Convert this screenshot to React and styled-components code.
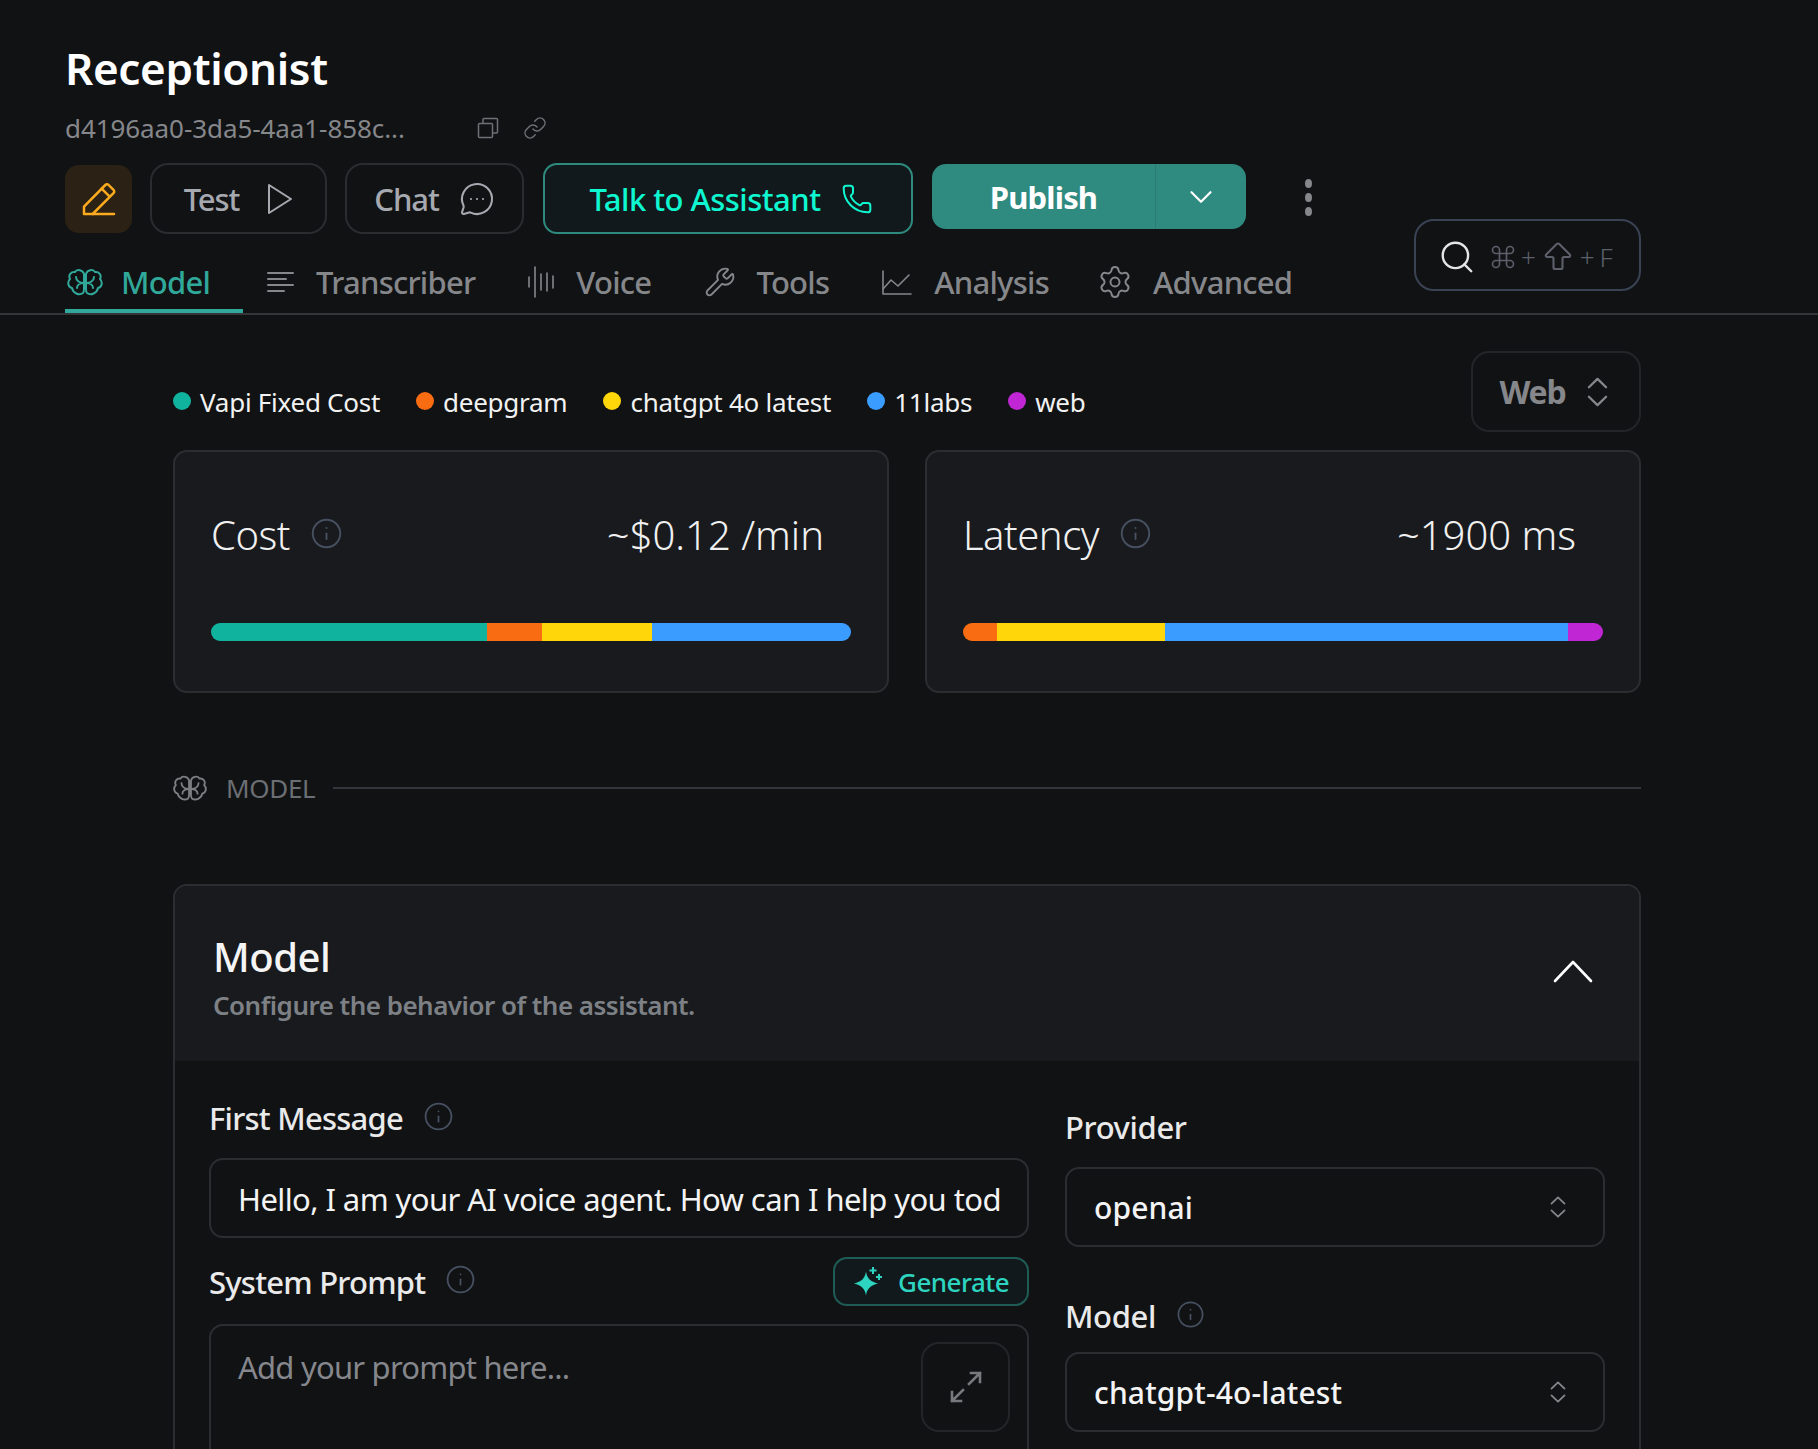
import React from "react";
import styled, { createGlobalStyle } from "styled-components";
import { MessageCircleMore, Phone, Link, ChevronDown, Search, Command, ArrowBigUp, Wrench, Settings, Info } from "lucide-react";

const Global = createGlobalStyle`
  html, body { margin: 0; padding: 0; background: #111214; height: 1449px; overflow: hidden; }
  #root { height: 1449px; overflow: hidden; }
  * { box-sizing: border-box; }
  body { font-family: "Noto Sans", "Open Sans", sans-serif; color: #f1f1f1; }
`;

const Page = styled.div`
  width: 1818px;
  height: 1449px;
  overflow: hidden;
`;
const Header = styled.header`
  height: 315px;
  padding: 43px 177px 0 65px;
  border-bottom: 2px solid #333538;
  display: flex;
  justify-content: space-between;
`;
const HeaderLeft = styled.div`
  display: flex;
  flex-direction: column;
`;
const Title = styled.h1`
  margin: 0;
  height: 50px;
  line-height: 50px;
  font-size: 44px;
  font-weight: 600;
  color: #fff;
  letter-spacing: -0.008em;
`;
const IdRow = styled.div`
  height: 36px;
  margin-top: 17px;
  display: flex;
  align-items: center;
  color: #85878a;
  font-size: 26px;
  letter-spacing: -0.003em;
`;
const IdText = styled.span`
  width: 411px;
`;
const IdIcon = styled.span`
  display: flex;
  width: 47px;
  color: #6e7074;
`;
const Buttons = styled.div`
  display: flex;
  align-items: center;
  margin-top: 17px;
  height: 71px;
`;
const EditBtn = styled.button`
  width: 67px;
  height: 68px;
  margin-right: 18px;
  border: 0;
  padding: 0;
  border-radius: 14px;
  background: #2c2115;
  color: #fbab1d;
  display: flex;
  align-items: center;
  justify-content: center;
`;
const GhostBtn = styled.button`
  width: ${p => p.$w}px;
  height: 71px;
  margin-right: ${p => p.$mr}px;
  border: 2px solid #2a2c30;
  border-radius: 18px;
  background: transparent;
  color: #a6a9b0;
  font: 500 31px "Noto Sans", sans-serif;
  letter-spacing: -0.035em;
  display: flex;
  align-items: center;
  justify-content: center;
  gap: ${p => p.$gap}px;
  padding: 0;
`;
const TalkBtn = styled.button`
  width: 370px;
  height: 71px;
  margin-right: 19px;
  border: 2px solid #2e8a7f;
  border-radius: 14px;
  background: #12191c;
  color: #0ef7d0;
  font: 500 31px "Noto Sans", sans-serif;
  letter-spacing: -0.017em;
  display: flex;
  align-items: center;
  justify-content: center;
  gap: 20px;
  padding: 0 0 0 6px;
`;
const PublishGroup = styled.div`
  width: 314px;
  height: 65px;
  margin-top: -4px;
  margin-right: 59px;
  border-radius: 14px;
  background: #2f8a7f;
  display: flex;
  overflow: hidden;
`;
const PublishBtn = styled.button`
  width: 223px;
  border: 0;
  padding: 0;
  background: transparent;
  color: #fff;
  font: 700 31px "Noto Sans", sans-serif;
  letter-spacing: -0.027em;
`;
const PublishArrow = styled.button`
  flex: 1;
  border: 0;
  border-left: 1px solid #2b7c72;
  padding: 0;
  background: transparent;
  color: #fff;
  display: flex;
  align-items: center;
  justify-content: center;
`;
const Dots = styled.div`
  width: 7px;
  display: flex;
  flex-direction: column;
  gap: 5px;
  margin-top: -2px;
  & > i {
    display: block;
    width: 7px;
    height: 9px;
    border-radius: 50%;
    background: #85878a;
  }
`;
const Tabs = styled.nav`
  display: flex;
  gap: 23px;
  height: 79px;
`;
const Tab = styled.div`
  height: 79px;
  padding: 20px ${p => p.$pr || 31}px 0 ${p => p.$pl || 0}px;
  display: flex;
  align-items: center;
  gap: ${p => p.$gap || 20}px;
  border-bottom: 4px solid ${p => (p.$active ? "#30a89a" : "transparent")};
  color: ${p => (p.$active ? "#30a89a" : "#85878a")};
  font-size: 31px;
  font-weight: 500;
  letter-spacing: -0.024em;
  & > svg { flex: none; }
`;
const SearchBox = styled.div`
  align-self: flex-end;
  width: 227px;
  height: 72px;
  margin-bottom: 22px;
  border: 2px solid #3a4354;
  border-radius: 20px;
  display: flex;
  align-items: center;
  padding: 4px 0 0 22px;
  color: #5b606a;
  font-size: 26px;
  font-weight: 300;
  word-spacing: -2px;
`;
const SearchHint = styled.span`
  display: flex;
  align-items: center;
  gap: 4px;
  margin-left: 13px;
`;
const Main = styled.main`
  padding: 36px 177px 0 173px;
`;
const LegendRow = styled.div`
  display: flex;
  justify-content: space-between;
  align-items: flex-end;
`;
const Legend = styled.div`
  display: flex;
  gap: 36px;
  height: 36px;
  margin-bottom: 12px;
`;
const LegendItem = styled.div`
  display: flex;
  gap: 9px;
  font-size: 26px;
  line-height: 36px;
  color: #f2f2f2;
  letter-spacing: -0.01em;
  & > i {
    width: 18px;
    height: 18px;
    margin-top: 8px;
    border-radius: 50%;
    background: ${p => p.$c};
  }
`;
const WebSelect = styled.div`
  width: 170px;
  height: 81px;
  border: 2px solid #232528;
  border-radius: 18px;
  display: flex;
  align-items: center;
  justify-content: center;
  gap: 22px;
  padding-right: 4px;
  color: #85878a;
  font-size: 32px;
  font-weight: 700;
  letter-spacing: -0.04em;
`;
const CardGrid = styled.div`
  display: grid;
  grid-template-columns: 716px 716px;
  gap: 36px;
  margin-top: 18px;
`;
const CostCard = styled.section`
  height: 243px;
  padding: 55px 36px 0;
  background: #181a1d;
  border: 2px solid #2b2d31;
  border-radius: 14px;
`;
const CostHead = styled.div`
  display: flex;
  align-items: center;
  height: 54px;
  padding-right: 27px;
  font-size: 40px;
  font-weight: 300;
  letter-spacing: -0.012em;
  color: #f0f0f0;
`;
const CostValue = styled.span`
  margin-left: auto;
  letter-spacing: 0;
`;
const InfoWrap = styled.span`
  display: flex;
  margin-left: ${p => p.$ml}px;
  margin-top: ${p => p.$mt || 0}px;
  color: #475061;
`;
const Bar = styled.div`
  margin-top: 62px;
  height: 18px;
  border-radius: 9px;
  overflow: hidden;
  display: flex;
`;
const Seg = styled.div`
  height: 100%;
  background: ${p => p.$c};
`;
const SectionRow = styled.div`
  display: flex;
  align-items: center;
  height: 40px;
  margin-top: 75px;
  color: #6b6e73;
  font-size: 26px;
  letter-spacing: -0.012em;
  & > svg { margin-right: 19px; color: #7c7e82; }
`;
const SectionLine = styled.div`
  flex: 1;
  height: 2px;
  margin-left: 18px;
  margin-top: -1px;
  background: #33353a;
`;
const ModelCard = styled.section`
  margin-top: 76px;
  height: 700px;
  border: 2px solid #2b2d31;
  border-radius: 14px;
  overflow: hidden;
`;
const ModelHead = styled.div`
  height: 175px;
  background: #181a1d;
  padding: 44px 38px 0;
  display: flex;
  justify-content: space-between;
`;
const ModelTitle = styled.h2`
  margin: 0;
  height: 54px;
  line-height: 54px;
  font-size: 40px;
  font-weight: 500;
  color: #f5f5f5;
  letter-spacing: -0.012em;
`;
const ModelSub = styled.p`
  margin: 3px 0 0;
  height: 36px;
  line-height: 36px;
  font-size: 26px;
  font-weight: 600;
  color: #7d8085;
  letter-spacing: -0.02em;
`;
const Collapse = styled.span`
  display: flex;
  color: #fff;
  margin: 29px 8px 0 0;
`;
const FormGrid = styled.div`
  display: grid;
  grid-template-columns: 820px 540px;
  gap: 36px;
  padding: 37px 34px 0;
`;
const Col = styled.div`
  display: flex;
  flex-direction: column;
  padding-top: ${p => p.$pt || 0}px;
`;
const LabelRow = styled.div`
  display: flex;
  align-items: center;
  justify-content: space-between;
  height: ${p => p.$h || 40}px;
  margin-top: ${p => p.$mt || 0}px;
`;
const Label = styled.label`
  display: flex;
  align-items: center;
  font-size: 31px;
  font-weight: 500;
  color: #eaeaea;
  letter-spacing: ${p => p.$ls || -0.025}em;
`;
const TextInput = styled.div`
  height: 80px;
  margin-top: ${p => p.$mt}px;
  border: 2px solid #2b2d31;
  border-radius: 14px;
  padding: 2px 22px 0 27px;
  display: flex;
  align-items: center;
  overflow: hidden;
  white-space: nowrap;
  font-size: 31px;
  color: #f4f4f4;
  letter-spacing: -0.019em;
`;
const GenerateBtn = styled.button`
  width: 196px;
  height: 49px;
  border: 2px solid #1f5c56;
  border-radius: 14px;
  background: #12191c;
  color: #2dd4bf;
  font: 500 26px "Noto Sans", sans-serif;
  letter-spacing: -0.02em;
  display: flex;
  align-items: center;
  gap: 16px;
  padding: 0 0 0 17px;
`;
const PromptBox = styled.div`
  height: 400px;
  margin-top: 18px;
  border: 2px solid #2b2d31;
  border-radius: 14px;
  padding: 21px 17px 0 27px;
  display: flex;
  justify-content: space-between;
  align-items: flex-start;
  font-size: 31px;
  line-height: 40px;
  color: #85878c;
  letter-spacing: -0.025em;
`;
const ExpandBtn = styled.button`
  width: 89px;
  height: 90px;
  margin-top: -5px;
  border: 2px solid #232528;
  border-radius: 18px;
  background: transparent;
  color: #77797d;
  display: flex;
  align-items: center;
  justify-content: center;
  padding: 0;
`;
const SelectBox = styled.div`
  height: 80px;
  margin-top: ${p => p.$mt}px;
  border: 2px solid #2b2d31;
  border-radius: 14px;
  padding: 0 37px 0 27px;
  display: flex;
  align-items: center;
  justify-content: space-between;
  font-size: 30px;
  font-weight: 500;
  letter-spacing: 0.005em;
  color: #f4f4f4;
  & > svg { color: #85878a; }
`;

const Brain = ({ w, h }) => (
  <svg width={w} height={h} viewBox="0 0 36 28" fill="none" stroke="currentColor" strokeWidth="2" strokeLinecap="round" strokeLinejoin="round">
    <path d="M17 6C16 2 10 0.500 8 4C4 3.500 1 7 3 11C0 14 1 19 5 20C6 25 12 28 16 25C17 24 17 23 17 21V6Z" />
    <path d="M19 6C20 2 26 0.500 28 4C32 3.500 35 7 33 11C36 14 35 19 31 20C30 25 24 28 20 25C19 24 19 23 19 21V6Z" />
    <path d="M17 15C13 15 9 13 9 9M17 15C13 15 10 17 10 20M19 15C23 15 27 13 27 9M19 15C23 15 26 17 26 20" />
  </svg>
);
const Pencil = () => (
  <svg width="40" height="40" viewBox="0 0 24 24" fill="none" stroke="currentColor" strokeWidth="1.5" strokeLinecap="round" strokeLinejoin="round">
    <path d="M3 21v-4.400L15.800 3.600a1.400 1.400 0 0 1 2 0l2.900 2.900a1.400 1.400 0 0 1 0 2L8.200 21H3Z" />
    <path d="M13.600 5.800l4.800 4.800M8.200 21H21" />
  </svg>
);
const PlayIcon = () => (
  <svg width="26" height="32" viewBox="0 0 26 32" fill="none" stroke="currentColor" strokeWidth="2" strokeLinejoin="round">
    <path d="M2 2L24 16L2 30Z" />
  </svg>
);
const CopyIcon = () => (
  <svg width="24" height="24" viewBox="0 0 24 24" fill="none" stroke="currentColor" strokeWidth="1.5" strokeLinejoin="round">
    <rect x="2.500" y="7.500" width="14" height="14" rx="1" />
    <path d="M7 7.500V3.500a1 1 0 0 1 1-1h12.500a1 1 0 0 1 1 1V16a1 1 0 0 1-1 1h-4" />
  </svg>
);
const Lines = () => (
  <svg width="30" height="30" viewBox="0 0 30 30" fill="none" stroke="currentColor" strokeWidth="2" strokeLinecap="round">
    <path d="M2 6h25M2 12h18M2 18h25M2 24h16" />
  </svg>
);
const Wave = () => (
  <svg width="28" height="34" viewBox="0 0 28 34" fill="none" stroke="currentColor" strokeWidth="1.6" strokeLinecap="round">
    <path d="M2 12v10M8 2v30M14 9v16M20 8v18M26 11v12" />
  </svg>
);
const ChartIcon = () => (
  <svg width="32" height="32" viewBox="0 0 32 32" fill="none" stroke="currentColor" strokeWidth="1.6" strokeLinecap="round" strokeLinejoin="round">
    <path d="M2 5v23h28" />
    <path d="M2 23l8-9 7 6 11-11" />
  </svg>
);
const ExpandIcon = () => (
  <svg width="36" height="34" viewBox="0 0 36 34" fill="none" stroke="currentColor" strokeWidth="2.600" strokeLinecap="square">
    <path d="M21 14L32 3M23 3h9v9M15 20L4 31M4 22v9h9" />
  </svg>
);
const Sparkle = () => (
  <svg width="30" height="30" viewBox="0 0 30 30" fill="currentColor" stroke="none">
    <path d="M14 4.500C15 11.500 18.500 14.500 26 16.500 18.500 18.500 15 21.500 14 28.500 13 21.500 9.500 18.500 2 16.500 9.500 14.500 13 11.500 14 4.500Z" />
    <path d="M20 0h2v2.500h2.500v2h-2.500V7h-2V4.500h-2.500v-2H20ZM26 7h2v2h2v2h-2v2h-2v-2h-2V9h2Z" />
  </svg>
);
const UpDown = ({ w, h, sw = 2.400 }) => (
  <svg width={w} height={h} viewBox="0 0 22 32" preserveAspectRatio="none" fill="none" stroke="currentColor" strokeWidth={sw} strokeLinecap="round" strokeLinejoin="round">
    <path d="M2 11L11 2L20 11M2 21L11 30L20 21" />
  </svg>
);
const CollapseIcon = () => (
  <svg width="40" height="24" viewBox="0 0 40 24" fill="none" stroke="currentColor" strokeWidth="2.600" strokeLinecap="round" strokeLinejoin="round">
    <path d="M2 22L20 3L38 22" />
  </svg>
);

const InfoI = ({ w = 31 }) => <Info size={w} strokeWidth={1.4} />;

const costSegs = [["#10b49e", 43.1], ["#f96c12", 8.6], ["#ffd60a", 17.2], ["#3b9cff", 31.1]];
const latencySegs = [["#f96c12", 5.3], ["#ffd60a", 26.2], ["#3b9cff", 63], ["#c026d3", 5.5]];
const legend = [
  ["#10b49e", "Vapi Fixed Cost"],
  ["#f96c12", "deepgram"],
  ["#ffd60a", "chatgpt 4o latest"],
  ["#3b9cff", "11labs"],
  ["#c026d3", "web"],
];

export default function App() {
  return (
    <Page>
      <Global />
      <Header>
        <HeaderLeft>
          <Title>Receptionist</Title>
          <IdRow>
            <IdText>d4196aa0-3da5-4aa1-858c...</IdText>
            <IdIcon><CopyIcon /></IdIcon>
            <IdIcon><Link size={24} strokeWidth={1.5} /></IdIcon>
          </IdRow>
          <Buttons>
            <EditBtn><Pencil /></EditBtn>
            <GhostBtn $w={177} $mr={18} $gap={28}>Test <PlayIcon /></GhostBtn>
            <GhostBtn $w={179} $mr={19} $gap={20}>Chat <MessageCircleMore size={36} strokeWidth={1.4} /></GhostBtn>
            <TalkBtn>Talk to Assistant <Phone size={32} strokeWidth={1.5} /></TalkBtn>
            <PublishGroup>
              <PublishBtn>Publish</PublishBtn>
              <PublishArrow><ChevronDown size={38} strokeWidth={1.4} /></PublishArrow>
            </PublishGroup>
            <Dots><i /><i /><i /></Dots>
          </Buttons>
          <Tabs>
            <Tab $active $pl={2} $gap={18} $pr={33}><Brain w={36} h={28} /> Model</Tab>
            <Tab $pr={29}><Lines /> Transcriber</Tab>
            <Tab $gap={21} $pr={30}><Wave /> Voice</Tab>
            <Tab $pr={29}><Wrench size={32} strokeWidth={1.4} /> Tools</Tab>
            <Tab $pr={25} $gap={21}><ChartIcon /> Analysis</Tab>
            <Tab><Settings size={36} strokeWidth={1.3} /> Advanced</Tab>
          </Tabs>
        </HeaderLeft>
        <SearchBox>
          <Search size={38} color="#e5e5e5" strokeWidth={1.5} />
          <SearchHint>
            <Command size={28} strokeWidth={1.4} />+<ArrowBigUp size={36} strokeWidth={1.4} />+ F
          </SearchHint>
        </SearchBox>
      </Header>
      <Main>
        <LegendRow>
          <Legend>
            {legend.map(([c, t]) => (
              <LegendItem key={t} $c={c}><i />{t}</LegendItem>
            ))}
          </Legend>
          <WebSelect>Web <UpDown w={21} h={30} /></WebSelect>
        </LegendRow>
        <CardGrid>
          <CostCard>
            <CostHead>
              Cost
              <InfoWrap $ml={20} $mt={-2}><InfoI w={33} /></InfoWrap>
              <CostValue>~$0.12 /min</CostValue>
            </CostHead>
            <Bar>{costSegs.map(([c, w]) => <Seg key={c} $c={c} style={{ width: `${w}%` }} />)}</Bar>
          </CostCard>
          <CostCard>
            <CostHead>
              Latency
              <InfoWrap $ml={20} $mt={-2}><InfoI w={33} /></InfoWrap>
              <CostValue>~1900 ms</CostValue>
            </CostHead>
            <Bar>{latencySegs.map(([c, w]) => <Seg key={c} $c={c} style={{ width: `${w}%` }} />)}</Bar>
          </CostCard>
        </CardGrid>
        <SectionRow>
          <Brain w={34} h={28} />
          MODEL
          <SectionLine />
        </SectionRow>
        <ModelCard>
          <ModelHead>
            <div>
              <ModelTitle>Model</ModelTitle>
              <ModelSub>Configure the behavior of the assistant.</ModelSub>
            </div>
            <Collapse><CollapseIcon /></Collapse>
          </ModelHead>
          <FormGrid>
            <Col>
              <LabelRow>
                <Label>First Message<InfoWrap $ml={20} $mt={-4}><InfoI /></InfoWrap></Label>
              </LabelRow>
              <TextInput $mt={20}>Hello, I am your AI voice agent. How can I help you tod</TextInput>
              <LabelRow $h={49} $mt={19}>
                <Label>System Prompt<InfoWrap $ml={20} $mt={-4}><InfoI /></InfoWrap></Label>
                <GenerateBtn><Sparkle /> Generate</GenerateBtn>
              </LabelRow>
              <PromptBox>
                Add your prompt here...
                <ExpandBtn><ExpandIcon /></ExpandBtn>
              </PromptBox>
            </Col>
            <Col $pt={9}>
              <LabelRow><Label $ls={-0.012}>Provider</Label></LabelRow>
              <SelectBox $mt={20}>openai <UpDown w={16} h={22} /></SelectBox>
              <LabelRow $mt={49}>
                <Label $ls={-0.012}>Model<InfoWrap $ml={20} $mt={-4}><InfoI w={29} /></InfoWrap></Label>
              </LabelRow>
              <SelectBox $mt={16}>chatgpt-4o-latest <UpDown w={16} h={22} /></SelectBox>
            </Col>
          </FormGrid>
        </ModelCard>
      </Main>
    </Page>
  );
}
